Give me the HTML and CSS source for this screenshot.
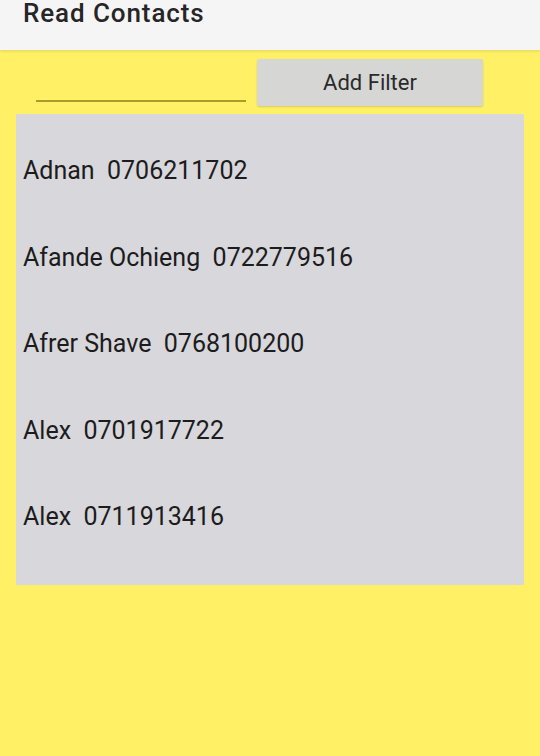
FILE: index.html
```html
<!DOCTYPE html>
<html>
<head>
<meta charset="utf-8">
<link rel="stylesheet" href="styles.css">
</head>
<body>
<div class="app">
  <header class="appbar"><span class="title">Read Contacts</span></header>
  <main class="content">
    <div class="filter-row">
      <div class="field"></div>
      <button class="btn">Add Filter</button>
    </div>
    <div class="list">
      <div class="row">Adnan&nbsp; 0706211702</div>
      <div class="row">Afande Ochieng&nbsp; 0722779516</div>
      <div class="row">Afrer Shave&nbsp; 0768100200</div>
      <div class="row">Alex&nbsp; 0701917722</div>
      <div class="row">Alex&nbsp; 0711913416</div>
    </div>
  </main>
</div>
</body>
</html>
```
FILE: styles.css
```css
html, body {
  margin: 0;
  padding: 0;
}
body {
  width: 540px;
  height: 756px;
  overflow: hidden;
  font-family: Roboto, "Liberation Sans", sans-serif;
  background: #fff066;
}
.app {
  display: flex;
  flex-direction: column;
  height: 756px;
}
.appbar {
  height: 50px;
  background: #f5f5f6;
  box-shadow: 0 1px 3px rgba(0,0,0,0.12);
  padding-left: 23px;
  position: relative;
  z-index: 1;
  box-sizing: border-box;
}
.title {
  display: block;
  font-size: 26px;
  font-weight: 500;
  letter-spacing: 0.9px;
  color: #262626;
  line-height: 26px;
}
.content {
  flex: 1;
  background: #fff066;
  padding: 8px 16px 0 16px;
}
.filter-row {
  display: flex;
  align-items: flex-start;
  height: 56px;
}
.field {
  width: 210px;
  margin-left: 20px;
  margin-top: 42px;
  height: 2px;
  background: #a99c2a;
}
.btn {
  margin-left: 11px;
  margin-top: 1px;
  width: 226px;
  height: 47px;
  border: none;
  border-radius: 2px;
  background: #d6d7d5;
  box-shadow: 0 1px 2px rgba(0,0,0,0.15);
  font-family: Roboto, "Liberation Sans", sans-serif;
  font-size: 22px;
  color: #2a2a2a;
  padding: 0;
}
.list {
  width: 508px;
  height: 471px;
  background: #d8d7dc;
  padding-top: 43px;
  box-sizing: border-box;
}
.row {
  font-size: 25px;
  line-height: 28px;
  height: 86.6px;
  padding-left: 7px;
  color: #1c1c1c;
}
```
